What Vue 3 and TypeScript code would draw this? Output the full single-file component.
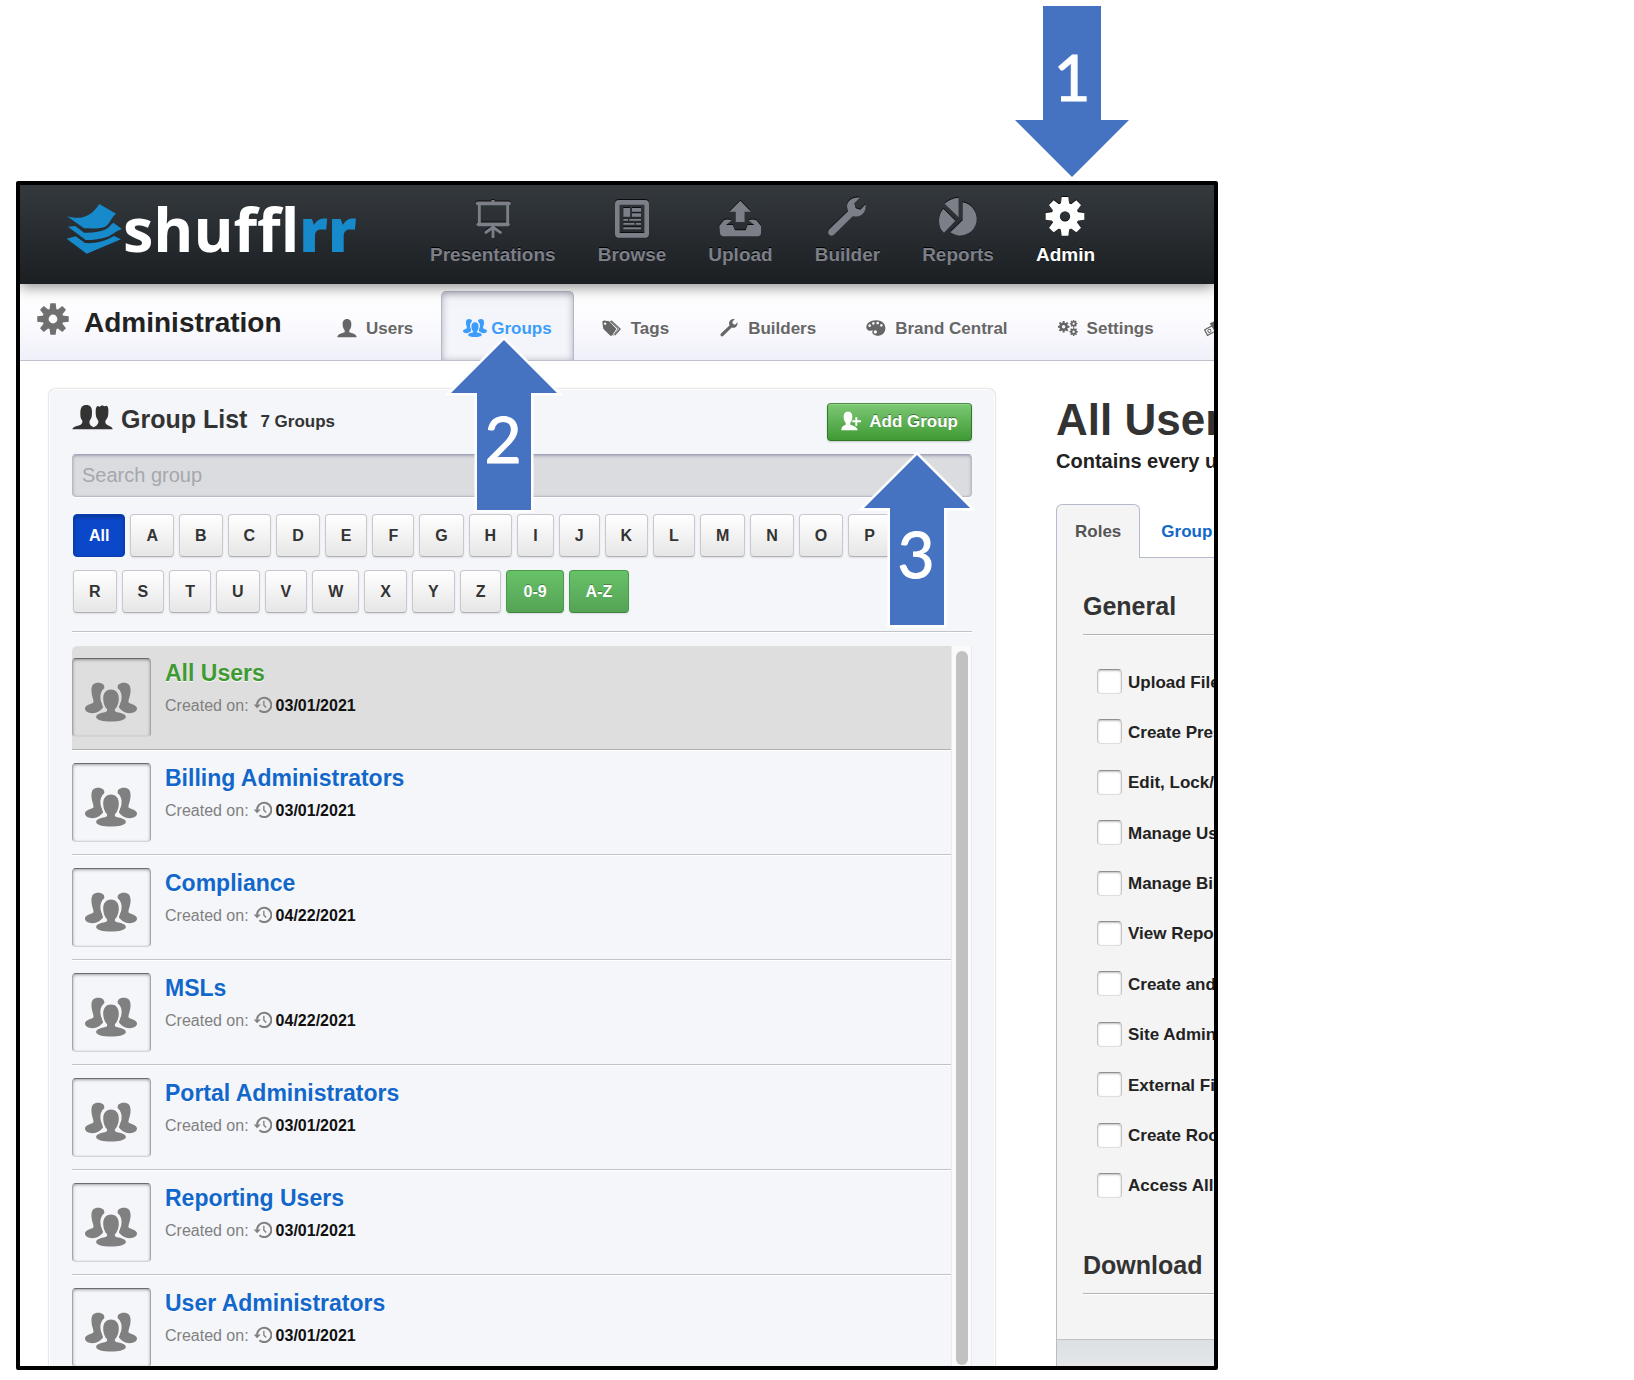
<script setup lang="ts">
import { ref } from 'vue'

interface NavItem { id: string; label: string }
interface Group { name: string; created: string }
interface Callout { step: number; cls: string; box: string; points: string; x: number; y: number }

const mainNav: NavItem[] = [
  { id: 'presentations', label: 'Presentations' },
  { id: 'browse', label: 'Browse' },
  { id: 'upload', label: 'Upload' },
  { id: 'builder', label: 'Builder' },
  { id: 'reports', label: 'Reports' },
  { id: 'admin', label: 'Admin' },
]

const adminTabs: NavItem[] = [
  { id: 'user', label: 'Users' },
  { id: 'people', label: 'Groups' },
  { id: 'tags', label: 'Tags' },
  { id: 'wrench', label: 'Builders' },
  { id: 'palette', label: 'Brand Central' },
  { id: 'cogs', label: 'Settings' },
  { id: 'ticket', label: 'Billing' },
]

const filters: string[] = ['All', ...'ABCDEFGHIJKLMNOPQRSTUVWXYZ'.split(''), '0-9', 'A-Z']
const activeFilter = ref('All')
const search = ref('')

const groups: Group[] = [
  { name: 'All Users', created: '03/01/2021' },
  { name: 'Billing Administrators', created: '03/01/2021' },
  { name: 'Compliance', created: '04/22/2021' },
  { name: 'MSLs', created: '04/22/2021' },
  { name: 'Portal Administrators', created: '03/01/2021' },
  { name: 'Reporting Users', created: '03/01/2021' },
  { name: 'User Administrators', created: '03/01/2021' },
]
const selected = ref('All Users')

const roles: string[] = [
  'Upload Files',
  'Create Presentations',
  'Edit, Lock/Unlock',
  'Manage Users',
  'Manage Billing',
  'View Reports',
  'Create and Edit',
  'Site Administrator',
  'External Files',
  'Create Root Folders',
  'Access All',
]

const upArrow = '57,4 110,57 84,57 84,174 30,174 30,57 4,57'
const callouts: Callout[] = [
  { step: 1, cls: 'one', box: '0 0 124 180', points: '33,4 91,4 91,118 119,118 62,175 5,118 33,118', x: 62, y: 99 },
  { step: 2, cls: 'two', box: '0 0 116 180', points: upArrow, x: 56, y: 127 },
  { step: 3, cls: 'three', box: '0 0 116 180', points: upArrow, x: 56, y: 127 },
]

const teeth: number[] = [0, 45, 90, 135, 180, 225, 270, 315]
</script>

<template>
  <svg class="sprite" aria-hidden="true">
    <symbol id="i-presentations" viewBox="180 78 132 126">
      <g fill="none" stroke="currentColor">
        <path d="M200 100H294" stroke-width="11" stroke-linecap="round" />
        <path d="M246 90V98M205 100V163M290 100V163" stroke-width="9" />
        <path d="M202 163H291" stroke-width="11" stroke-linecap="round" />
        <path d="M246 165V200" stroke-width="9" stroke-linecap="round" />
        <path d="M246 172L225 187M246 172L268 187" stroke-width="9" stroke-linecap="round" />
      </g>
    </symbol>
    <symbol id="i-browse" viewBox="597 78 132 126">
      <rect x="619" y="97" width="88" height="99" rx="5" fill="none" stroke="currentColor" stroke-width="14" />
      <path fill="currentColor" d="M637 114h20v26h-20zM663 114h27v11h-27zM663 130h27v10h-27zM637 146h14v6h-14zM655 146h35v6h-35zM637 158h34v6h-34zM675 158h15v6h-15zM637 172h53v6h-53z" />
    </symbol>
    <symbol id="i-upload" viewBox="925 78 132 126">
      <path fill="currentColor" d="M992 92L1024 125H1005V156H978V125H959ZM943 151Q954 146 966 151L949 165H969L976 181H1008L1014 165H1034L1017 151Q1029 146 1040 151L1054 168V190Q1053 199 1044 199H939Q932 198 931 190L929 168Z" />
    </symbol>
    <symbol id="i-builder" viewBox="14 78 132 126">
      <path fill="currentColor" d="M118 83C98 79 80 92 80 110L83 124L27 178C20 186 24 196 33 197Q39 197 43 192L98 138C120 145 139 128 136 103L120 119L106 115L102 100Z" />
    </symbol>
    <symbol id="i-reports" viewBox="345 78 132 126">
      <path fill="currentColor" d="M425 97A50 50 0 1 1 388 187L425 151ZM413 83V142L371 101Q389 84 413 83ZM367 116L403 152L369 188Q354 175 354 152Q354 131 367 116Z" />
    </symbol>
    <symbol id="i-admin" viewBox="-66 -61 132 126">
      <circle r="28" fill="none" stroke="currentColor" stroke-width="25" />
      <path v-for="t in teeth" :key="t" d="M-13 -34L-10 -58H10L13 -34Z" fill="currentColor" :transform="`rotate(${t})`" />
    </symbol>
    <symbol id="i-gear" viewBox="-60 -60 120 120">
      <circle r="28" fill="none" stroke="currentColor" stroke-width="23" />
      <path v-for="t in teeth" :key="t" d="M-13 -34L-10 -59H10L13 -34Z" fill="currentColor" :transform="`rotate(${t})`" />
    </symbol>
    <symbol id="i-user" viewBox="1011 440 60 60">
      <path fill="currentColor" d="M1041 443C1050 443 1055 450 1054 460C1054 468 1051 473 1048 477V483C1054 486 1069 487 1070 498H1012C1013 487 1028 486 1034 483V477C1031 473 1028 468 1028 460C1027 450 1032 443 1041 443Z" />
    </symbol>
    <symbol id="i-people" viewBox="0 0 154 118">
      <g fill="currentColor">
        <path d="M19 24C19 9 26 2 39 2C52 2 59 9 57 18C48 25 44 37 46 50C47 62 55 66 53 76C46 84 36 92 22 92C8 91 0 86 0 78C1 69 14 66 23 62C30 58 19 44 19 24Z" />
        <path d="M135 24C135 9 128 2 115 2C102 2 95 9 97 18C106 25 110 37 108 50C107 62 99 66 101 76C108 84 118 92 132 92C146 91 154 86 154 78C153 69 140 66 131 62C124 58 135 44 135 24Z" />
        <path class="halo" d="M77 22C92 22 101 33 100 52C99 66 94 75 89 80C87 87 90 88 99 90C112 92 121 97 121 104C120 112 100 117 77 117C53 117 34 112 33 104C33 97 42 92 55 90C64 88 67 87 65 80C60 75 55 66 54 52C53 33 62 22 77 22Z" />
      </g>
    </symbol>
    <symbol id="i-tags" viewBox="572 443 64 56">
      <path fill="currentColor" fill-rule="evenodd" d="M573 452Q573 447 579 447L595 449L618 474L604 495Q600 497 597 494L576 473ZM582 453a4 4 0 1 0 .1 0Z" />
      <path fill="none" stroke="currentColor" stroke-width="4" d="M601 448L630 474L613 494" />
      <path fill="none" stroke="currentColor" stroke-width="3" d="M598 449L624 474L608 495" />
    </symbol>
    <symbol id="i-wrench" viewBox="14 78 132 126">
      <path fill="currentColor" d="M118 83C98 79 80 92 80 110L83 124L27 178C20 186 24 196 33 197Q39 197 43 192L98 138C120 145 139 128 136 103L120 119L106 115L102 100Z" />
    </symbol>
    <symbol id="i-palette" viewBox="130 443 60 56">
      <path fill="currentColor" fill-rule="evenodd" d="M160 448C178 447 189 459 188 473C187 487 176 495 162 494C150 492 146 484 151 478C145 481 133 480 131 470C130 457 144 448 160 448ZM141 460a4 4 0 1 0 .1 0ZM152 453a4 4 0 1 0 .1 0ZM165 452a4 4 0 1 0 .1 0ZM176 459a4 4 0 1 0 .1 0ZM158 478a5 5 0 1 0 .1 0Z" />
    </symbol>
    <symbol id="i-cogs" viewBox="707 443 64 56">
      <g v-for="c in [[725, 467, 31], [757, 457, 20], [757, 483, 22]]" :key="c[1]" :transform="`translate(${c[0]} ${c[1]}) scale(${c[2] / 100})`">
        <circle r="30" fill="none" stroke="currentColor" stroke-width="25" />
        <path v-for="t in teeth" :key="t" d="M-13 -34L-10 -60H10L13 -34Z" fill="currentColor" :transform="`rotate(${t})`" />
      </g>
    </symbol>
    <symbol id="i-ticket" viewBox="1145 443 64 56">
      <g transform="rotate(-28 1160 480)">
        <path fill="none" stroke="currentColor" stroke-width="4" d="M1150 471H1205V491H1150Z" />
        <circle cx="1162" cy="481" r="5" fill="none" stroke="currentColor" stroke-width="3" />
        <path fill="currentColor" d="M1174 461H1210V490H1176Z" />
      </g>
    </symbol>
    <symbol id="i-history" viewBox="638 228 56 50">
      <g fill="none" stroke="currentColor" stroke-width="6">
        <path d="M650 254A21 21 0 1 1 657 270" />
        <path d="M670 242V255L677 262" stroke-width="4" />
      </g>
      <path fill="currentColor" d="M640 253H661L650 264Z" />
    </symbol>
    <symbol id="i-pair" viewBox="126 102 123 78">
      <path fill="currentColor" d="M127 178C128 170 142 168 152 164C158 160 158 155 156 150C151 145 151 138 151 128C151 112 157 105 169 105C181 105 186 112 186 126C186 139 185 145 180 150C177 156 178 164 184 168L191 172L199 167C206 160 207 153 203 149C199 144 197 138 197 127C197 117 198 109 203 108L209 110L216 106L223 109L231 107C236 112 235 120 235 127C235 138 233 145 228 149C225 154 225 158 229 163C237 169 247 170 248 178Z" />
    </symbol>
    <symbol id="i-adduser" viewBox="274 122 60 60">
      <path fill="currentColor" d="M295 124C304 124 309 130 308 141C308 148 306 153 302 157V163C310 166 323 168 324 180H275C275 169 281 166 288 163V157C284 153 282 148 282 141C281 130 286 124 295 124Z" />
      <path d="M320 141V166M308 153H334" stroke="currentColor" stroke-width="6" />
    </symbol>
  </svg>

  <main class="page">
    <div class="window">
      <header class="topbar">
        <a class="logo" href="#">
          <svg viewBox="18 25 171 156" aria-hidden="true">
            <path d="M21 65C62 76 92 68 118 28L168 57C150 72 148 92 133 97C114 103 92 101 72 101Z" />
            <path d="M24 96L46 94L72 114C98 115 122 112 138 104C148 98 152 90 160 84L186 103C166 110 160 118 143 126C124 133 100 136 77 136Z" />
            <path d="M20 132L47 125L75 145C104 147 124 142 143 134L162 124L183 134L80 177Z" />
          </svg>
          <span class="wordmark">shuffl<b>rr</b></span>
        </a>
        <nav class="main-nav" aria-label="Main">
          <a v-for="item in mainNav" :key="item.id" href="#" :class="{ active: item.id === 'admin' }">
            <svg aria-hidden="true"><use :href="`#i-${item.id}`" /></svg>
            <span>{{ item.label }}</span>
          </a>
        </nav>
      </header>

      <div class="subbar">
        <div class="section-title">
          <svg aria-hidden="true"><use href="#i-gear" /></svg>
          <h1>Administration</h1>
        </div>
        <nav class="tabs" aria-label="Administration">
          <a v-for="tab in adminTabs" :key="tab.id" href="#" :class="[tab.id, { active: tab.id === 'people' }]">
            <svg aria-hidden="true"><use :href="`#i-${tab.id}`" /></svg>
            <span>{{ tab.label }}</span>
          </a>
        </nav>
      </div>

      <div class="content">
        <section class="panel">
          <div class="panel-head">
            <svg aria-hidden="true"><use href="#i-pair" /></svg>
            <h2>Group List</h2>
            <span class="count">7 Groups</span>
            <button class="add" type="button">
              <svg aria-hidden="true"><use href="#i-adduser" /></svg>
              <span>Add Group</span>
            </button>
          </div>
          <input v-model="search" class="search" type="text" placeholder="Search group" aria-label="Search group" />
          <div class="filters">
            <button
              v-for="f in filters"
              :key="f"
              type="button"
              :class="{ active: f === activeFilter, range: f.includes('-') }"
              @click="activeFilter = f"
            >{{ f }}</button>
          </div>
          <div class="list-area">
            <ul class="groups">
              <li v-for="g in groups" :key="g.name" :class="{ selected: g.name === selected }">
                <div class="avatar"><svg aria-hidden="true"><use href="#i-people" /></svg></div>
                <div class="info">
                  <a href="#" @click.prevent="selected = g.name">{{ g.name }}</a>
                  <p>
                    <span>Created on:</span>
                    <svg aria-hidden="true"><use href="#i-history" /></svg>
                    <time>{{ g.created }}</time>
                  </p>
                </div>
              </li>
            </ul>
            <div class="track"><div class="thumb"></div></div>
          </div>
        </section>

        <section class="detail">
          <h2 class="detail-title">All Users</h2>
          <p class="detail-sub">Contains every user</p>
          <nav class="detail-tabs" aria-label="Group">
            <a class="active" href="#">Roles</a>
            <a href="#">Group</a>
          </nav>
          <div class="roles">
            <h3>General</h3>
            <div class="role-list">
              <label v-for="r in roles" :key="r"><input type="checkbox" /><span>{{ r }}</span></label>
            </div>
            <h3>Download</h3>
          </div>
          <div class="detail-foot"></div>
        </section>
      </div>
    </div>

    <svg v-for="c in callouts" :key="c.step" class="callout" :class="c.cls" :viewBox="c.box">
      <polygon :points="c.points" />
      <text :x="c.x" :y="c.y" text-anchor="middle">{{ c.step }}</text>
    </svg>
  </main>
</template>

<style>
body {
  margin: 0;
  background: #fff;
}
</style>

<style scoped>
* {
  box-sizing: border-box;
}
h1, h2, h3, p, ul {
  margin: 0;
  padding: 0;
}
a {
  text-decoration: none;
}
button, input {
  font-family: inherit;
}
.sprite {
  position: absolute;
  width: 0;
  height: 0;
}
.page {
  position: relative;
  height: 100vh;
  padding: 181px 416px 10px 16px;
  font-family: "Liberation Sans", Arial, sans-serif;
  color: #333;
  overflow: hidden;
}
.window {
  display: flex;
  flex-direction: column;
  height: 100%;
  border: 4px solid #000;
  border-radius: 2px;
  overflow: hidden;
  background: #fff;
}

/* Top bar */
.topbar {
  position: relative;
  z-index: 1;
  display: flex;
  flex: none;
  height: 99px;
  background: linear-gradient(#34393e, #1b1f22);
  box-shadow: 0 2px 14px rgba(0, 0, 0, 0.5);
}
.logo {
  display: flex;
  flex: 0 0 410px;
  padding: 14px 0 0 46px;
}
.logo svg {
  flex: none;
  width: 57px;
  height: 52px;
  margin-top: 4px;
  fill: #178acb;
}
.wordmark {
  color: #fff;
  font: 700 61px/60px "Open Sans", "Noto Sans", sans-serif;
  font-variant-ligatures: none;
}
.wordmark b {
  color: #178acb;
}
.main-nav {
  display: flex;
  gap: 42px;
  padding-top: 11px;
}
.main-nav a {
  display: flex;
  flex-direction: column;
  align-items: center;
  gap: 6px;
  color: #7c7f88;
  font-size: 19px;
  font-weight: 700;
  line-height: 22px;
  text-shadow: 0 -1px 0 #000;
}
.main-nav svg {
  width: 44px;
  height: 42px;
  margin: 0 -2px;
  filter: drop-shadow(0 -1px 0 #0b0c0e);
}
.main-nav a.active {
  color: #fff;
}

/* Section bar */
.subbar {
  display: flex;
  flex: none;
  height: 77px;
  border-bottom: 1px solid #bfc2cb;
  background: linear-gradient(#fff, #fcfcff 45%, #f0f0f9);
}
.section-title {
  display: flex;
  flex: 0 0 295px;
  padding: 19px 0 0 17px;
}
.section-title svg {
  width: 32px;
  height: 32px;
  margin-right: 15px;
  color: #6f6f6f;
}
.section-title h1 {
  margin-top: 4px;
  color: #222;
  font-size: 28px;
  line-height: 32px;
}
.tabs {
  display: flex;
  gap: 6px;
  padding-top: 7px;
  min-width: 0;
}
.tabs a {
  display: flex;
  flex: none;
  gap: 9px;
  height: 69px;
  padding: 28px 22px 0;
  color: #666;
  font-size: 17px;
  font-weight: 700;
  line-height: 20px;
  text-shadow: 0 1px 0 #fff;
}
.tabs svg {
  width: 20px;
  height: 20px;
  margin-top: -1px;
  --halo: #f4f5fa;
}
.tabs a.people {
  gap: 4px;
}
.tabs a.people svg {
  width: 24px;
}
.tabs a.active {
  padding: 27px 21px 0;
  border: 1px solid #b4b7c8;
  border-bottom: 0;
  border-radius: 5px 5px 0 0;
  background: #f4f5fa;
  box-shadow: inset 0 1px 7px rgba(60, 60, 90, 0.4);
  color: #3b9cfc;
}

/* Body */
.content {
  display: flex;
  gap: 61px;
  padding: 28px 0 0 29px;
}
.panel {
  flex: 1;
  min-width: 0;
  padding: 13px 22px 0;
  border: 1px solid #fff;
  border-radius: 6px;
  background: #f5f6fa;
  box-shadow: 0 0 2px rgba(0, 0, 0, 0.35);
}
.panel-head {
  display: flex;
  align-items: center;
  height: 38px;
}
.panel-head > svg {
  width: 41px;
  height: 26px;
  margin: 0 8px 10px 0;
}
.panel-head h2 {
  font-size: 25px;
  line-height: 30px;
  margin-bottom: 6px;
}
.count {
  margin-left: 13px;
  font-size: 17px;
  font-weight: 700;
  line-height: 20px;
}
.add {
  display: flex;
  align-items: center;
  gap: 8px;
  height: 38px;
  margin-left: auto;
  padding: 0 13px;
  border: 1px solid #2f7a27;
  border-top-color: #4b9046;
  border-radius: 4px;
  background: linear-gradient(#7cc874, #3f9a33);
  box-shadow: inset 0 1px 0 #8fd488, 0 1px 2px rgba(0, 0, 0, 0.2);
  color: #fff;
  font-size: 17px;
  font-weight: 700;
  line-height: 20px;
  text-shadow: 0 -1px 0 rgba(0, 0, 0, 0.4);
}
.add svg {
  width: 20px;
  height: 20px;
  margin-bottom: 2px;
}
.search {
  display: block;
  width: 100%;
  height: 43px;
  margin-top: 13px;
  padding: 0 9px;
  border: 1px solid #b9bbc9;
  border-top-color: #a3a5b8;
  border-radius: 4px;
  outline: none;
  background: #dbdce0;
  box-shadow: inset 0 1px 3px rgba(50, 50, 90, 0.35), 0 1px 0 #fff;
  color: #333;
  font-size: 20px;
}
.search::placeholder {
  color: #a6a7ab;
  opacity: 1;
}
.filters {
  display: flex;
  flex-wrap: wrap;
  gap: 13px 5px;
  padding: 17px 0 18px 1px;
  border-bottom: 1px solid #c2c3c8;
  box-shadow: 0 1px 0 #fff;
}
.filters button {
  height: 43px;
  padding: 0 15px;
  border: 1px solid #c9c9cb;
  border-bottom-color: #b0b0b2;
  border-radius: 4px;
  background: linear-gradient(#fff, #e6e6e6);
  box-shadow: 0 1px 2px rgba(0, 0, 0, 0.1);
  color: #333;
  font-size: 16px;
  font-weight: 700;
  line-height: 20px;
}
.filters button.active {
  border-color: #0a3eb0;
  background: #0b47c9;
  box-shadow: inset 0 2px 4px rgba(0, 0, 0, 0.25);
  color: #fff;
}
.filters button.range {
  padding: 0 16px;
  border-color: #4b9a4b;
  border-bottom-color: #3d833d;
  background: linear-gradient(#68c268, #55a355);
  color: #fff;
  text-shadow: 0 -1px 0 rgba(0, 0, 0, 0.3);
}
.list-area {
  display: flex;
  margin-top: 14px;
}
.groups {
  flex: 1;
  list-style: none;
}
.groups li {
  display: flex;
  gap: 14px;
  padding: 12px 0;
  border-bottom: 1px solid #c3c4c9;
  box-shadow: 0 1px 0 #fff;
  margin-bottom: 1px;
  --halo: #f5f6fa;
}
.groups li.selected {
  border-radius: 5px 0 0 0;
  border-bottom-color: #b0b0b2;
  background: #dedede;
  --halo: #dedede;
}
.avatar {
  display: flex;
  align-items: center;
  justify-content: center;
  width: 79px;
  height: 79px;
  padding: 8px 1px 0 0;
  border: 1px solid #a5a5a8;
  border-top-color: #6c6c6e;
  border-bottom-color: #d5d5d8;
  border-radius: 4px;
  box-shadow: inset 0 1px 3px rgba(0, 0, 0, 0.35);
  color: #808080;
}
.avatar svg {
  width: 52px;
  height: 40px;
}
.halo {
  stroke: var(--halo);
  stroke-width: 11px;
  paint-order: stroke;
}
.info {
  padding-top: 1px;
}
.info a {
  display: block;
  color: #1267cb;
  font-size: 23px;
  font-weight: 700;
  line-height: 28px;
  text-shadow: 0 1px 0 #fff;
}
.selected .info a {
  color: #3f9a33;
}
.info p {
  display: flex;
  gap: 4px;
  margin-top: 9px;
  color: #808080;
  font-size: 16px;
  line-height: 20px;
}
.info p svg {
  width: 19px;
  height: 17px;
}
.info time {
  color: #111;
  font-weight: 700;
}
.track {
  display: flex;
  justify-content: center;
  flex: 0 0 21px;
  height: 720px;
  padding: 5px 0 1px;
  border: solid #ebebed;
  border-width: 0 1px;
  background: #fafafb;
}
.thumb {
  width: 12px;
  border-radius: 6px;
  background: #c1c1c1;
}

/* Selected group */
.detail {
  flex: 0 0 158px;
  overflow: hidden;
  white-space: nowrap;
}
.detail-title {
  margin-top: 6px;
  font-size: 44px;
  line-height: 50px;
}
.detail-sub {
  margin-top: 4px;
  color: #222;
  font-size: 20px;
  font-weight: 700;
  line-height: 24px;
}
.detail-tabs {
  display: flex;
  height: 54px;
  margin-top: 31px;
  font-size: 17px;
  font-weight: 700;
  line-height: 20px;
}
.detail-tabs a {
  flex: 1 0 auto;
  padding: 18px 21px 0;
  border-bottom: 1px solid #b6bacd;
  color: #1267cb;
}
.detail-tabs a.active {
  flex: none;
  padding: 17px 18px 0;
  border: 1px solid #b6bacd;
  border-bottom: 0;
  border-radius: 6px 6px 0 0;
  background: #f4f4f4;
  color: #555;
}
.roles {
  padding: 33px 0 45px 26px;
  border-left: 1px solid #b9bcc4;
  background: #f4f4f4;
}
.roles h3 {
  padding-bottom: 13px;
  border-bottom: 1px solid #b3b3b3;
  box-shadow: 0 1px 0 #fff;
  font-size: 25px;
  line-height: 30px;
}
.role-list {
  display: flex;
  flex-direction: column;
  justify-content: space-between;
  height: 529px;
  margin: 34px 0 52px 14px;
}
.role-list label {
  display: flex;
  align-items: center;
  gap: 6px;
  height: 25px;
  color: #222;
  font-size: 17px;
  font-weight: 700;
  line-height: 20px;
}
.role-list span {
  padding-top: 2px;
}
.role-list input {
  flex: none;
  width: 25px;
  height: 25px;
  margin: 0;
  appearance: none;
  border: 1px solid #c4c4c4;
  border-top-color: #8f8f8f;
  border-bottom-color: #dedede;
  border-radius: 4px;
  background: #fff;
  box-shadow: inset 0 1px 2px rgba(0, 0, 0, 0.25);
}
.detail-foot {
  height: 60px;
  border-left: 1px solid #b9bcc4;
  border-top: 1px solid #c0c3c6;
  background: linear-gradient(#dce0e3, #e6eaed 40px);
}

/* Step arrows lie over the window */
.callout {
  position: absolute;
  height: 180px;
  overflow: visible;
}
.callout polygon {
  fill: #4673c1;
  stroke: #fff;
  stroke-width: 5px;
  paint-order: stroke;
}
.callout text {
  fill: #fff;
  stroke: #fff;
  stroke-width: 1px;
  font: 400 64px/64px Lato, sans-serif;
}
.one {
  left: 1010px;
  top: 2px;
  width: 124px;
}
.two {
  left: 447px;
  top: 336px;
  width: 116px;
}
.three {
  left: 860px;
  top: 451px;
  width: 116px;
}
</style>
